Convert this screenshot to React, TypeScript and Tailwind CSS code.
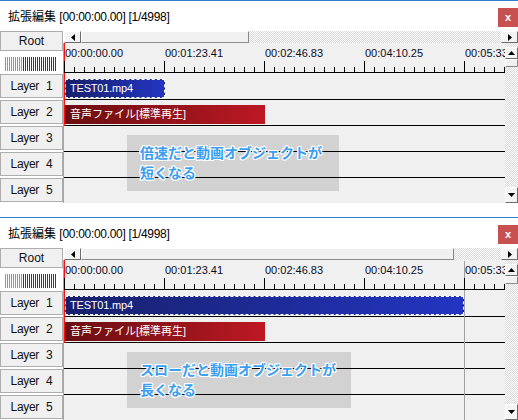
import React from "react";

const dither =
  "bg-[image:repeating-conic-gradient(#d8d8d8_0_25%,#ffffff_0_50%)] bg-[length:2px_2px]";

function Arrow({ dir }: { dir: "left" | "right" | "up" | "down" }) {
  const pts = {
    left: "4,0 4,7 0,3.5",
    right: "0,0 0,7 4,3.5",
    up: "0,4 7,4 3.5,0",
    down: "0,0 7,0 3.5,4",
  }[dir];
  const horiz = dir === "left" || dir === "right";
  return (
    <svg width={horiz ? 4 : 7} height={horiz ? 7 : 4} viewBox={horiz ? "0 0 4 7" : "0 0 7 4"}>
      <polygon points={pts} fill="#000" />
    </svg>
  );
}

function ScrollButton({ dir, className }: { dir: "left" | "right" | "up" | "down"; className: string }) {
  return (
    <div
      className={`flex items-center justify-center bg-[#f4f4f4] border border-t-white border-l-white border-r-[#6b6b6b] border-b-[#6b6b6b] ${className}`}
    >
      <Arrow dir={dir} />
    </div>
  );
}

function LayerButton({ n }: { n: number }) {
  return (
    <div className="mt-[2px] h-[24px] flex items-center justify-center border border-[#adadad] bg-[#f0f0f0] text-[12px] tracking-[-0.3px] text-[#111]">
      Layer<span className="ml-[7px]">{n}</span>
    </div>
  );
}

function Gauge() {
  const bars = Array.from({ length: 26 }, (_, i) => i);
  return (
    <svg width="52" height="14" className="mx-[5px] mt-[6px]">
      {bars.map((i) => (
        <rect key={i} x={i * 2} y={0} width={1} height={14} fill={i < 9 ? "#6c9de2" : "#2c3c72"} />
      ))}
    </svg>
  );
}

function Ticks() {
  const minor = Array.from({ length: 45 }, (_, i) => i * 10);
  return (
    <svg width="441" height="12" className="absolute left-0 bottom-0">
      {minor.map((x) =>
        x % 100 === 0 ? (
          <rect key={x} x={x} y={0} width={1} height={12} fill="#000" />
        ) : (
          <rect key={x} x={x} y={6} width={1} height={6} fill="#000" />
        )
      )}
      <rect x={0} y={11} width={441} height={1} fill="#000" />
    </svg>
  );
}

type WinProps = {
  thumbW: number;
  clipW: number;
  endMarker?: boolean;
  line1: string;
  line2: string;
  overlayW: number;
};

function EditWindow({ thumbW, clipW, endMarker, line1, line2, overlayW }: WinProps) {
  const labels = ["00:00:00.00", "00:01:23.41", "00:02:46.83", "00:04:10.25", "00:05:33.66"];
  return (
    <div className="h-[217px] shrink-0 border-t border-[#2b7fd4] bg-white flex flex-col">
      {/* Title bar */}
      <div className="h-[30px] flex items-start justify-between">
        <div className="pl-[8px] pt-[8px] text-[12px] leading-[16px] text-black">
          拡張編集 <span className="tracking-[-0.3px]">[00:00:00.00] [1/4998]</span>
        </div>
        <div className="mt-[7px] w-[20px] h-[19px] bg-[#c75050] flex items-center justify-center text-white text-[11px] font-bold leading-none">
          x
        </div>
      </div>

      {/* Body */}
      <div className="h-[172px] flex">
        {/* Layer buttons */}
        <div className="w-[63px] flex flex-col bg-white">
          <div className="h-[20px] flex items-center justify-center border border-[#adadad] bg-[#f0f0f0] text-[12px] text-[#111]">
            Root
          </div>
          <Gauge />
          <div className="h-px" />
          {[1, 2, 3, 4, 5].map((n) => (
            <LayerButton key={n} n={n} />
          ))}
        </div>
        <div className="w-px flex flex-col">
          <div className="h-[12px] bg-white" />
          <div className="flex-1 bg-[#00e8f0]" />
        </div>

        {/* Timeline side */}
        <div className="flex-1 flex flex-col">
          <div className="h-[12px] flex">
            <ScrollButton dir="left" className="w-[17px]" />
            <div
              className="bg-[#f0f0f0] border border-t-white border-l-white border-r-[#8a8a8a] border-b-[#8a8a8a]"
              style={{ width: thumbW }}
            />
            <div className={`flex-1 ${dither}`} />
            <ScrollButton dir="right" className="w-[17px]" />
          </div>

          <div className="flex-1 flex">
            <div className="w-[441px] relative overflow-hidden bg-[#f0f0f0] flex flex-col">
              {endMarker && <div className="absolute left-[400px] top-[1px] bottom-0 w-px bg-[#a0a0a0]" />}
              <div className="absolute left-0 top-0 h-[83px] w-px bg-[#ff1010]" />

              <div className="h-[30px] relative">
                <div className="flex pt-[4px] text-[11px] leading-[13px] text-[#0c0c1c]">
                  {labels.map((l) => (
                    <div key={l} className="w-[100px] shrink-0 pl-px whitespace-nowrap">
                      {l}
                    </div>
                  ))}
                </div>
                <Ticks />
              </div>

              <div className="h-[27px] border-b border-black pt-[6px] pl-px">
                <div
                  className="h-[19px] border border-dashed border-white bg-linear-to-r from-[#17206c] to-[#2335c2] text-white text-[11px] tracking-[-0.2px] leading-[17px] pl-[4px]"
                  style={{ width: clipW }}
                >
                  TEST01.mp4
                </div>
              </div>
              <div className="h-[26px] border-b border-black pt-[5px] pl-px">
                <div className="w-[200px] h-[19px] bg-linear-to-r from-[#6a0e12] to-[#bd1823] text-white text-[11px] leading-[19px] pl-[5px]">
                  音声ファイル[標準再生]
                </div>
              </div>
              <div className="h-[26px] border-b border-black" />
              <div className="h-[26px] border-b border-black" />
              <div className="flex-1" />

              <div
                className="absolute left-[63px] top-[92px] h-[56px] bg-black/[0.12] pl-[13px] pt-[8px] text-[14px] leading-[20px] font-bold text-[#3b9ef0] [text-shadow:1px_0_0_#fff,-1px_0_0_#fff,0_1px_0_#fff,0_-1px_0_#fff,1px_1px_0_#fff,-1px_-1px_0_#fff,1px_-1px_0_#fff,-1px_1px_0_#fff]"
                style={{ width: overlayW }}
              >
                <div>{line1}</div>
                <div>{line2}</div>
              </div>
            </div>

            <div className={`flex-1 flex flex-col ${dither}`}>
              <ScrollButton dir="up" className="mt-[4px] h-[12px]" />
              <div className="h-[8px] bg-[#f0f0f0] border border-t-white border-l-white border-r-[#8a8a8a] border-b-[#8a8a8a]" />
              <div className="flex-1" />
              <ScrollButton dir="down" className="h-[16px]" />
            </div>
          </div>
        </div>
      </div>
      <div className="flex-1" />
    </div>
  );
}

export default function App() {
  return (
    <div className="w-[518px] h-[420px] overflow-hidden bg-white font-['Liberation_Sans','Noto_Sans_CJK_JP',sans-serif] flex flex-col">
      <EditWindow
        thumbW={168}
        clipW={100}
        line1="倍速だと動画オブジェクトが"
        line2="短くなる"
        overlayW={212}
      />
      <EditWindow
        thumbW={373}
        clipW={399}
        endMarker
        line1="スローだと動画オブジェクトが"
        line2="長くなる"
        overlayW={224}
      />
    </div>
  );
}
